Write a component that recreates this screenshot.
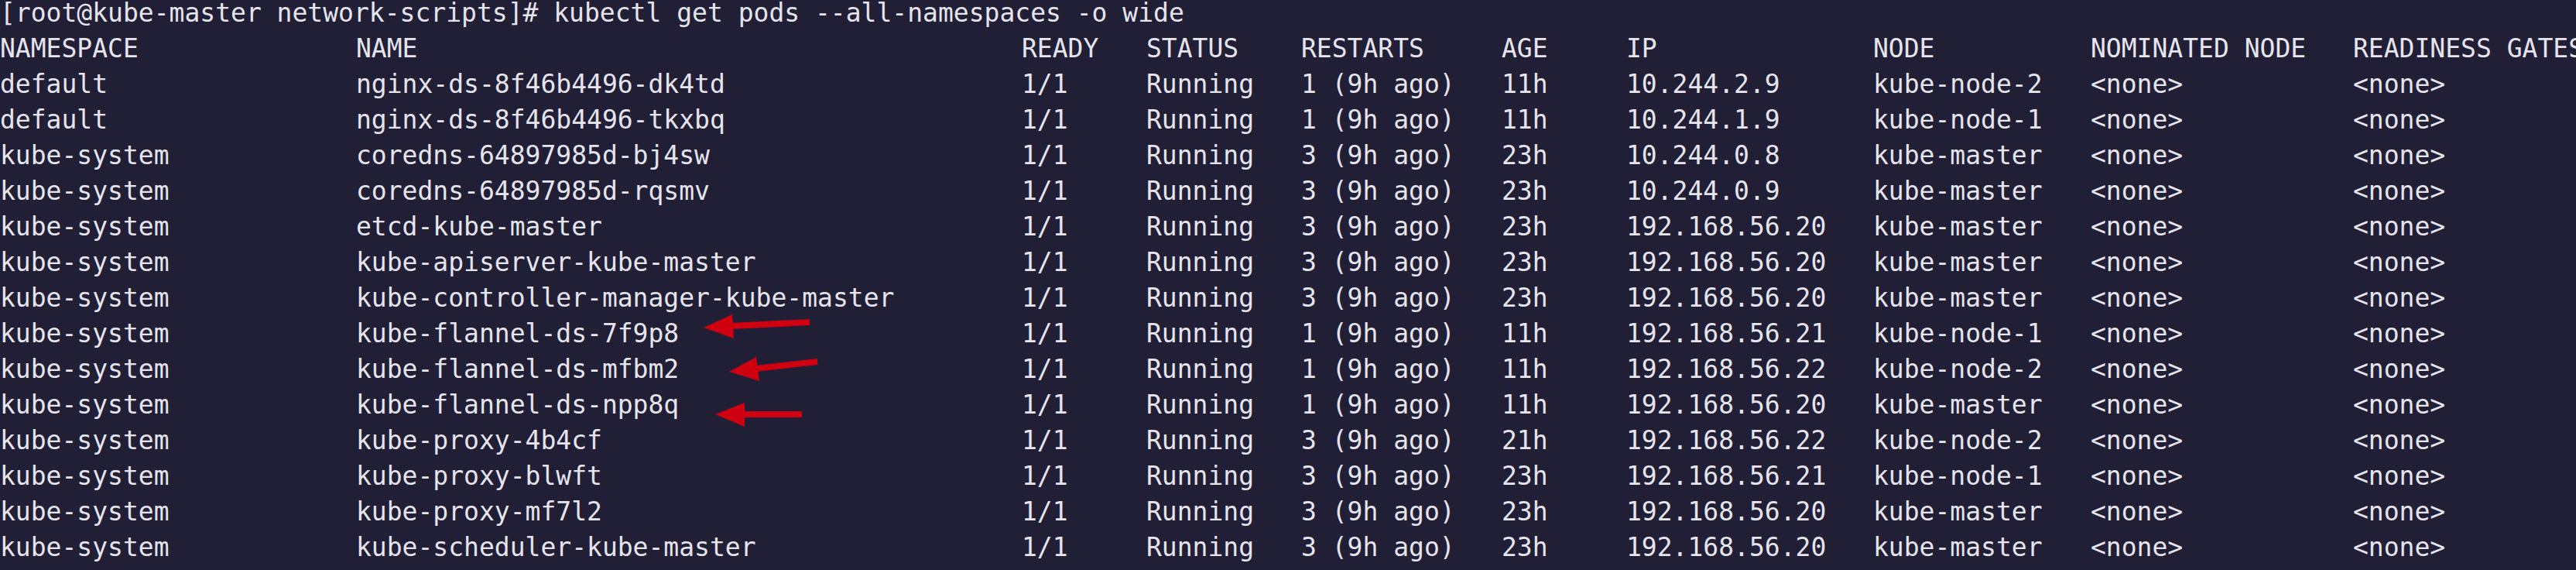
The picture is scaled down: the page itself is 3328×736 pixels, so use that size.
const prompt = "[root@kube-master network-scripts]# kubectl get pods --all-namespaces -o wide";

const header = ["NAMESPACE", "NAME", "READY", "STATUS", "RESTARTS", "AGE", "IP", "NODE", "NOMINATED NODE", "READINESS GATES"];

const pods: [string, string, string, string, string][] = [
  ["default", "nginx-ds-8f46b4496-dk4td", "1", "11h", "10.244.2.9|kube-node-2"],
  ["default", "nginx-ds-8f46b4496-tkxbq", "1", "11h", "10.244.1.9|kube-node-1"],
  ["kube-system", "coredns-64897985d-bj4sw", "3", "23h", "10.244.0.8|kube-master"],
  ["kube-system", "coredns-64897985d-rqsmv", "3", "23h", "10.244.0.9|kube-master"],
  ["kube-system", "etcd-kube-master", "3", "23h", "192.168.56.20|kube-master"],
  ["kube-system", "kube-apiserver-kube-master", "3", "23h", "192.168.56.20|kube-master"],
  ["kube-system", "kube-controller-manager-kube-master", "3", "23h", "192.168.56.20|kube-master"],
  ["kube-system", "kube-flannel-ds-7f9p8", "1", "11h", "192.168.56.21|kube-node-1"],
  ["kube-system", "kube-flannel-ds-mfbm2", "1", "11h", "192.168.56.22|kube-node-2"],
  ["kube-system", "kube-flannel-ds-npp8q", "1", "11h", "192.168.56.20|kube-master"],
  ["kube-system", "kube-proxy-4b4cf", "3", "21h", "192.168.56.22|kube-node-2"],
  ["kube-system", "kube-proxy-blwft", "3", "23h", "192.168.56.21|kube-node-1"],
  ["kube-system", "kube-proxy-mf7l2", "3", "23h", "192.168.56.20|kube-master"],
  ["kube-system", "kube-scheduler-kube-master", "3", "23h", "192.168.56.20|kube-master"],
];

const rows = pods.map(([ns, name, restarts, age, ipNode]) => {
  const [ip, node] = ipNode.split("|");
  return [ns, name, "1/1", "Running", `${restarts} (9h ago)`, age, ip, node, "<none>", "<none>"];
});

const cols = "grid grid-cols-[460px_860px_161px_200px_259px_161px_319px_281px_339px_288px]";

function Row({ cells }: { cells: string[] }) {
  return (
    <div className={cols}>
      {cells.map((c, i) => (
        <span key={i} className="whitespace-pre overflow-visible">
          {c}
        </span>
      ))}
    </div>
  );
}

export default function App() {
  return (
    <div className="relative h-[736px] w-[3328px] overflow-hidden bg-[#201f36] text-[#e6e4ec]">
      <div className="-mt-[6px] font-['DejaVu_Sans_Mono',monospace] text-[33px] leading-[46px]">
        <div className="whitespace-pre">{prompt}</div>
        <Row cells={header} />
        {rows.map((r) => (
          <Row key={r[1]} cells={r} />
        ))}
      </div>

      {/* annotation arrows pointing at the flannel pods */}
      <svg className="absolute left-0 top-0" width={3328} height={736} fill="#cf0010" stroke="#cf0010">
        <line x1={944} y1={421} x2={1046} y2={416} strokeWidth={8} />
        <polygon points="909,423 946,406 948,437" stroke="none" />
        <line x1={976} y1={476} x2={1056} y2={467} strokeWidth={8} />
        <polygon points="942,480 977,461 981,492" stroke="none" />
        <line x1={958} y1={535} x2={1036} y2={535} strokeWidth={8} />
        <polygon points="924,535 962,520 962,551" stroke="none" />
      </svg>
    </div>
  );
}
